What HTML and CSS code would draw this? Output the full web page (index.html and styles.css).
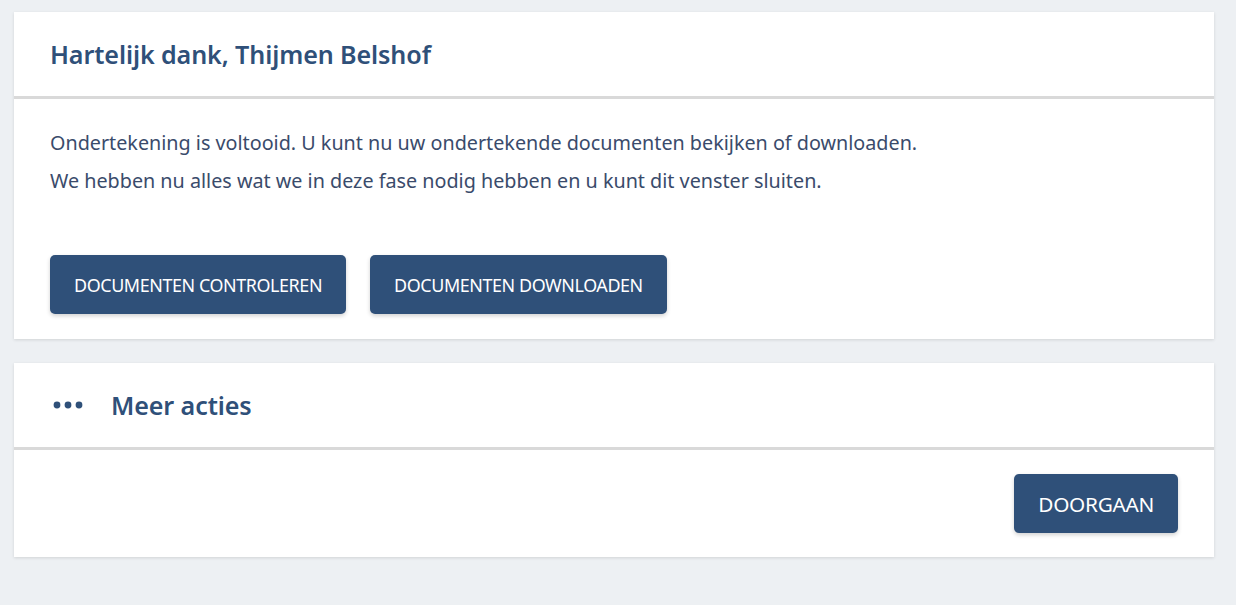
FILE: index.html
```html
<!DOCTYPE html>
<html lang="nl">
<head>
<meta charset="utf-8">
<title>Ondertekening voltooid</title>
<link rel="stylesheet" href="styles.css">
</head>
<body>
<main class="page">
  <section class="card">
    <header class="card-header">
      <h1 class="title">Hartelijk dank, Thijmen Belshof</h1>
    </header>
    <div class="card-body">
      <p class="text">Ondertekening is voltooid. U kunt nu uw ondertekende documenten bekijken of downloaden.</p>
      <p class="text">We hebben nu alles wat we in deze fase nodig hebben en u kunt dit venster sluiten.</p>
      <div class="actions">
        <button class="btn">DOCUMENTEN CONTROLEREN</button>
        <button class="btn">DOCUMENTEN DOWNLOADEN</button>
      </div>
    </div>
  </section>
  <section class="card">
    <header class="card-header more">
      <svg class="dots" width="30" height="8" viewBox="0 0 30 8" aria-hidden="true">
        <circle cx="4" cy="4" r="3.4" fill="#2f5079"/>
        <circle cx="15" cy="4" r="3.4" fill="#2f5079"/>
        <circle cx="26" cy="4" r="3.4" fill="#2f5079"/>
      </svg>
      <h2 class="title">Meer acties</h2>
    </header>
    <div class="card-footer">
      <button class="btn btn-lg">DOORGAAN</button>
    </div>
  </section>
</main>
</body>
</html>
```

FILE: styles.css
```css
* { box-sizing: border-box; }
html, body { margin: 0; padding: 0; }
body {
  background: #edf0f3;
  font-family: "Noto Sans", "Open Sans", "Liberation Sans", sans-serif;
  color: #34486a;
}
.page {
  padding: 12px 22px 24px 14px;
  display: flex;
  flex-direction: column;
  gap: 24px;
}
.card {
  background: #fff;
  box-shadow: 0 1px 3px rgba(0,0,0,0.12);
}
.card-header {
  height: 87px;
  padding: 0 36px;
  display: flex;
  align-items: center;
  border-bottom: 3px solid #d9d9d9;
}
.title {
  margin: 0;
  font-size: 25.1px;
  font-weight: 600;
  color: #2f5079;
  letter-spacing: -0.1px;
}
.more { padding-left: 39px; gap: 28px; }
.dots { display: block; margin-top: -1px; }
.card-body {
  padding: 25px 36px 25px;
}
.text {
  margin: 0;
  font-size: 19.75px;
  line-height: 38px;
  color: #3a4b6b;
}
.actions {
  display: flex;
  gap: 24px;
  margin-top: 55px;
}
.btn {
  height: 59px;
  padding: 0 24px;
  border: none;
  border-radius: 5px;
  background: #2f5079;
  color: #fff;
  font-family: inherit;
  font-size: 17.9px;
  letter-spacing: -0.4px;
  box-shadow: 0 2px 4px rgba(0,0,0,0.18);
  cursor: pointer;
}
.card-footer {
  display: flex;
  justify-content: flex-end;
  padding: 24px 36px;
}
.btn-lg { font-size: 20.8px; letter-spacing: -0.3px; }
```
